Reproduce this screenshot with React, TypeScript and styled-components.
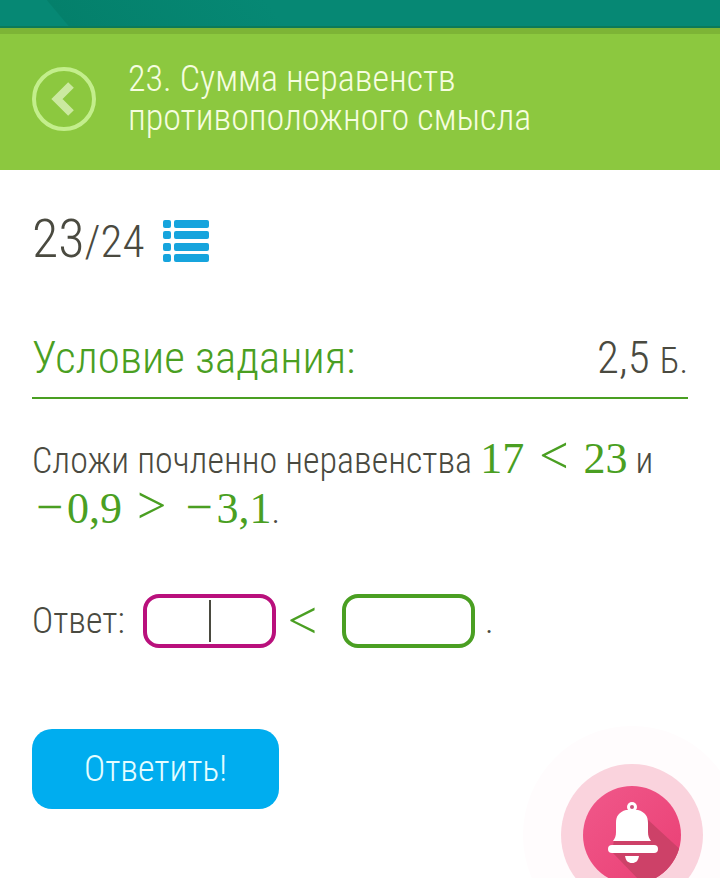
import React from "react";
import styled, { createGlobalStyle } from "styled-components";

const sans = `"Roboto Condensed", "Liberation Sans Narrow", Roboto, sans-serif`;
const serif = `"Liberation Serif", serif`;
const green = "#4a9f22";
const ink = "#4a4a40";

const GlobalStyle = createGlobalStyle`
  * { box-sizing: border-box; }
  body {
    margin: 0;
    background: #fff;
    color: ${ink};
    font-family: ${sans};
    font-weight: 300;
    overflow-x: hidden;
  }
`;

const StatusBar = styled.div`
  height: 28px;
  border-bottom: 2px solid #0c7a58;
  background: linear-gradient(50deg, #068874 0 52px, #04806b 53px, #068874 220px);
`;

const Header = styled.header`
  display: flex;
  align-items: center;
  gap: 32px;
  min-height: 142px;
  padding: 0 32px 6px;
  border-top: 6px solid #7db436;
  background: #8cc83f;
`;

const BackButton = styled.button`
  flex: none;
  padding: 0;
  border: 0;
  background: none;
  svg { display: block; }
`;

const Title = styled.h1`
  margin: 0;
  color: #f6fde0;
  font-size: 36px;
  line-height: 39px;
  font-weight: 300;
`;

const Content = styled.main`
  padding: 37px 32px 64px;
`;

const Progress = styled.div`
  display: flex;
  align-items: center;
  gap: 19px;
`;

const Counter = styled.div`
  font-size: 45px;
  line-height: 64px;
`;

const Current = styled.span`
  font-size: 54px;
`;

const ListButton = styled.button`
  padding: 0;
  border: 0;
  background: none;
  svg { display: block; }
`;

const SectionHead = styled.div`
  display: flex;
  align-items: baseline;
  justify-content: space-between;
  margin-top: 48px;
  border-bottom: 2px solid ${green};
`;

const SectionTitle = styled.h2`
  margin: 0;
  color: ${green};
  font-size: 45px;
  line-height: 72px;
  font-weight: 300;
`;

const Points = styled.div`
  font-size: 45px;
  line-height: 72px;
`;

const Unit = styled.span`
  font-size: 36px;
`;

const Task = styled.p`
  margin: 37px 0 0;
  font-size: 36px;
  line-height: 50px;
`;

const MathText = styled.span`
  color: ${green};
  font-family: ${serif};
  font-size: 44px;
  font-weight: 400;
  line-height: 40px;
  white-space: nowrap;
`;

const Relation = styled.span`
  margin: 0 15px;
  font-size: 52px;
  line-height: 0;
`;

const Minus = styled.span`
  margin: 0 4px;
  font-size: 48px;
  line-height: 0;
`;

const AnswerRow = styled.div`
  display: flex;
  align-items: center;
  margin-top: 58px;
  font-size: 36px;
  line-height: 52px;
`;

const AnswerRelation = styled(MathText)`
  margin: 0 25px 0 12px;
  font-size: 52px;
`;

const Field = styled.span`
  position: relative;
`;

const FieldLabel = styled.label`
  margin-right: 18px;
`;

const FullStop = styled.span`
  margin-left: 10px;
`;

const AnswerInput = styled.input<{ $active?: boolean }>`
  display: block;
  width: 133px;
  height: 54px;
  padding: 0 12px;
  border: 4px solid ${(p) => (p.$active ? "#b9107c" : green)};
  border-radius: 16px;
  outline: 0;
  background: #fff;
  color: ${ink};
  caret-color: transparent;
  font: inherit;
  text-align: center;
`;

const Caret = styled.span`
  position: absolute;
  top: 6px;
  bottom: 6px;
  left: 50%;
  width: 2px;
  background: ${ink};
  pointer-events: none;
`;

const SubmitButton = styled.button`
  margin-top: 81px;
  padding: 0 52px;
  border: 0;
  border-radius: 20px;
  background: #00adef;
  color: #e4fdff;
  font-family: inherit;
  font-size: 36px;
  font-weight: 300;
  line-height: 80px;
`;

const BellButton = styled.button`
  position: fixed;
  right: -22px;
  bottom: -67px;
  padding: 0;
  border: 0;
  background: none;
  svg { display: block; }
`;

function Bell() {
  return (
    <svg width="220" height="220" viewBox="0 0 220 220" aria-hidden="true">
      <defs>
        <linearGradient id="disc" x1="0" y1="0" x2="1" y2="1">
          <stop offset="0" stopColor="#f0588a" />
          <stop offset="1" stopColor="#ea3f74" />
        </linearGradient>
        <clipPath id="discClip"><circle cx="110" cy="110" r="49" /></clipPath>
      </defs>
      <circle cx="110" cy="110" r="109" fill="#fffcfd" />
      <circle cx="110" cy="110" r="71" fill="#fad3dd" />
      <circle cx="110" cy="110" r="49" fill="url(#disc)" />
      <path d="M124 93l50 46-30 44-54-56 2-12z" fill="#cd4168" clipPath="url(#discClip)" />
      <circle cx="110" cy="82" r="5" fill="#fff" />
      <path
        d="M104 85h12c7 2 10 6 10 13v9c0 4 1 6 3 9H91c2-3 3-5 3-9v-9c0-7 3-11 10-13z"
        fill="#fff"
      />
      <circle cx="110" cy="82" r="2" fill="#c9537c" />
      <rect x="86" y="120" width="50" height="8" rx="4" fill="#fff" />
      <path d="M103 131h14c-1 5-3 7-7 7s-6-2-7-7z" fill="#fff" />
    </svg>
  );
}

export default function App() {
  return (
    <>
      <GlobalStyle />
      <StatusBar />
      <Header>
        <BackButton aria-label="Назад">
          <svg width="64" height="64" viewBox="0 0 64 64" fill="none">
            <circle cx="32" cy="32" r="30" stroke="#c3ee8c" strokeWidth="4" />
            <path d="M39 18L25 32l14 14" stroke="#cbe9a0" strokeWidth="8" />
          </svg>
        </BackButton>
        <Title>
          23. Сумма неравенств
          <br />
          противоположного смысла
        </Title>
      </Header>
      <Content>
        <Progress>
          <Counter><Current>23</Current>/24</Counter>
          <ListButton aria-label="Список заданий">
            <svg width="46" height="42" viewBox="0 0 46 42" fill="#16a4dd">
              {[0, 11, 23, 34].map((y) => (
                <React.Fragment key={y}>
                  <rect x="0" y={y} width="8" height="8" rx="2" />
                  <rect x="11" y={y} width="35" height="8" rx="2" />
                </React.Fragment>
              ))}
            </svg>
          </ListButton>
        </Progress>
        <SectionHead>
          <SectionTitle>Условие задания:</SectionTitle>
          <Points>2,5 <Unit>Б.</Unit></Points>
        </SectionHead>
        <Task>
          Сложи почленно неравенства{" "}
          <MathText>17<Relation>&lt;</Relation>23</MathText> и{" "}
          <MathText>
            <Minus>−</Minus>0,9<Relation>&gt;</Relation>
            <Minus>−</Minus>3,1
          </MathText>.
        </Task>
        <AnswerRow>
          <FieldLabel htmlFor="left">Ответ:</FieldLabel>
          <Field>
            <AnswerInput id="left" $active />
            <Caret />
          </Field>
          <AnswerRelation>&lt;</AnswerRelation>
          <Field>
            <AnswerInput aria-label="Правая часть" />
          </Field>
          <FullStop>.</FullStop>
        </AnswerRow>
        <SubmitButton>Ответить!</SubmitButton>
      </Content>
      <BellButton aria-label="Уведомления">
        <Bell />
      </BellButton>
    </>
  );
}
